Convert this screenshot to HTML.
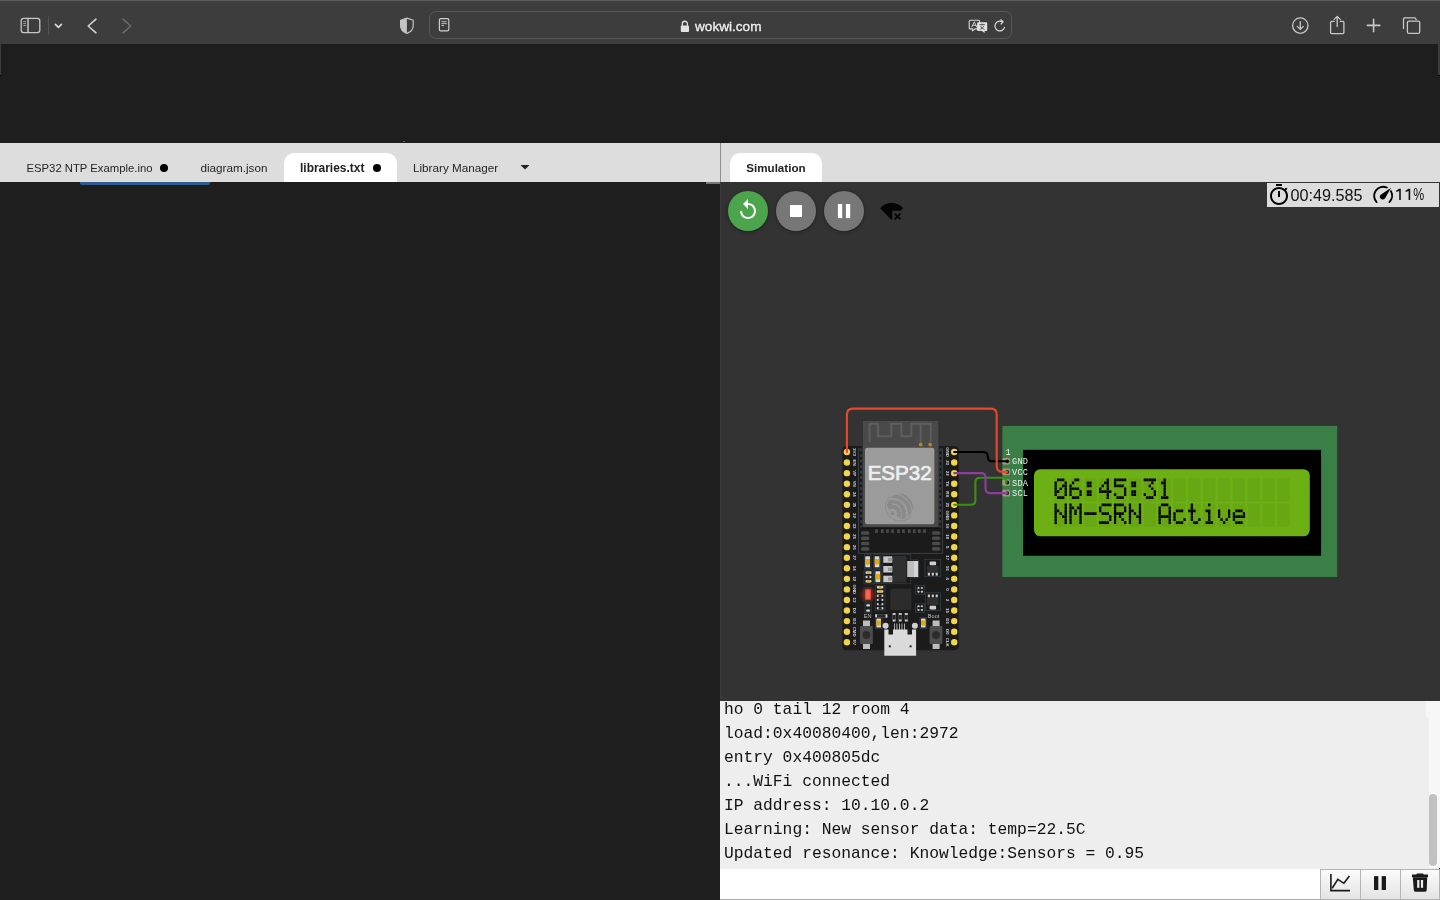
<!DOCTYPE html>
<html><head><meta charset="utf-8"><title>wokwi</title>
<style>
*{margin:0;padding:0;box-sizing:border-box}
html,body{width:1440px;height:900px;overflow:hidden;background:#1e1e1e;font-family:"Liberation Sans",sans-serif}
.a{position:absolute}
#toolbar{left:0;top:0;width:1440px;height:44px;background:#3d3d3d;border-top:1px solid #5c5c5c}
#content{left:0;top:44px;width:1440px;height:856px;background:#1e1e1e}
#winedge{left:0;top:44px;width:1px;height:31px;background:#3b3b3b}
#winedge2{left:1438px;top:44px;width:2px;height:31px;background:#3b3b3b}
#urlbar{left:429px;top:11px;width:583px;height:28px;border:1px solid #575757;border-radius:7px;background:#3d3d3d}
#url{left:695px;top:18.8px;font-size:13.6px;color:#f2f2f2;-webkit-text-stroke:0.3px #f2f2f2;transform:translateZ(0)}
#tabbar{left:0;top:143px;width:720px;height:39px;background:#dddddd}
#tabbar2{left:721px;top:143px;width:719px;height:39px;background:#dddddd}
#divider{left:720px;top:143px;width:1px;height:39px;background:#8f8f8f}
#divider2{left:720px;top:182px;width:1px;height:519px;background:#3b3b3b}
.tab{font-size:12.4px;color:#262626;top:161px;transform:translateZ(0)}
.dot{width:8.6px;height:8.6px;border-radius:50%;background:#000;top:163.7px}
#acttab{left:284px;top:153px;width:113px;height:29px;background:#fff;border-radius:10px 10px 0 0}
#simtab{left:730px;top:153px;width:92px;height:29px;background:#fff;border-radius:10px 10px 0 0}
#sim{left:721px;top:182px;width:719px;height:519px;background:#333333}
#editor{left:1px;top:182px;width:719px;height:718px;background:#1e1e1e}
#blueline{left:80px;top:182px;width:130px;height:3px;background:#2f5b8f;border-radius:0 0 2px 2px}
#greyline{left:706px;top:182px;width:14px;height:2px;background:#777}
.btn{width:40px;height:40px;border-radius:50%;top:191px;box-shadow:0 1px 4px rgba(0,0,0,.35)}
#timer{left:1267px;top:183px;width:172px;height:24px;background:#dddddd}
#serial{left:720px;top:701px;width:719px;height:168px;background:#eeeeee}
#serinput{left:720px;top:869px;width:720px;height:31px;background:#ffffff;border-bottom:1px solid #aaa}
.ser{left:724px;font-family:"Liberation Mono",monospace;font-size:16.3px;color:#111;white-space:pre;transform:scaleY(1.04);transform-origin:0 13.6px}
</style></head><body>
<div id="toolbar" class="a"></div>
<div id="content" class="a"></div>
<div id="winedge" class="a"></div><div id="winedge2" class="a"></div><div class="a" style="left:0;top:75px;width:1px;height:1px;background:#000"></div><div class="a" style="left:1438px;top:75px;width:2px;height:1px;background:#000"></div>
<div id="urlbar" class="a"></div>
<div id="url" class="a">wokwi.com</div>
<svg class="a" style="left:0;top:0" width="1440" height="44" viewBox="0 0 1440 44" fill="none" stroke-linecap="round" stroke-linejoin="round">
<rect x="21.2" y="18.3" width="18.6" height="14.3" rx="2.4" stroke="#c6c6c6" stroke-width="1.3"/>
<path d="M28 18.6V32.3" stroke="#c6c6c6" stroke-width="1.5"/>
<path d="M23.6 21.6H25.6M23.6 23.6H25.6M23.6 25.6H25.6" stroke="#a8a8a8" stroke-width="0.9"/>
<path d="M48.6 16.8V34.6" stroke="#565656" stroke-width="1"/>
<path d="M55.4 24.4L58.4 27.4L61.4 24.4" stroke="#d8d8d8" stroke-width="1.7"/>
<path d="M96 19.2L88.2 26L96 32.8" stroke="#d2d2d2" stroke-width="1.6"/>
<path d="M123 19.2L130.8 26L123 32.8" stroke="#6a6a6a" stroke-width="1.6"/>
<path d="M406.9 18.1L400.6 20.2V25.8C400.6 29.8 403.3 32 406.9 33.4C410.5 32 413.2 29.8 413.2 25.8V20.2Z" stroke="#c4c4c4" stroke-width="1.2"/>
<path d="M406.9 18.1L400.6 20.2V25.8C400.6 29.8 403.3 32 406.9 33.4Z" fill="#c4c4c4"/>
<rect x="439.4" y="18.6" width="9.4" height="12.2" rx="1.4" stroke="#cfcfcf" stroke-width="1.2"/>
<path d="M441.8 21.7H446.3M441.8 23.6H446.3M441.8 25.5H443.6" stroke="#cfcfcf" stroke-width="0.9"/>
<path d="M682.3 25.6V23.8A2.55 2.55 0 0 1 687.4 23.8V25.6" stroke="#e2e2e2" stroke-width="1.3"/>
<rect x="680.8" y="25.4" width="8.2" height="6.7" rx="1" fill="#e2e2e2"/>
<path d="M970.2 20.3H978.6Q979.6 20.3 979.6 21.3V27.9Q979.6 28.9 978.6 28.9H975L972.5 30.8V28.9H970.2Q969.2 28.9 969.2 27.9V21.3Q969.2 20.3 970.2 20.3Z" stroke="#d6d6d6" stroke-width="1.1"/>
<path d="M971.9 27L974.3 21.8L976.7 27M972.8 25.3H975.8" stroke="#d6d6d6" stroke-width="0.9"/>
<path d="M978 22.3H986.3Q987.2 22.3 987.2 23.2V30Q987.2 30.9 986.3 30.9H984.6V33L982 30.9H978Q977.1 30.9 977.1 30V23.2Q977.1 22.3 978 22.3Z" fill="#e4e4e4"/>
<path d="M979.8 24.6H984.5M982.1 24V25M980.5 26.2Q982 29 984.2 29.5M983.8 26.2Q982.4 29 980 29.5" stroke="#3d3d3d" stroke-width="0.8"/>
<path d="M1004.5 27.4A4.85 4.85 0 1 1 1002.3 21.9" stroke="#d6d6d6" stroke-width="1.2"/>
<path d="M1000.8 19.8L1003.1 21.8L1001 24" stroke="#d6d6d6" stroke-width="1.2"/>
<circle cx="1300.3" cy="25.6" r="7.7" stroke="#c8c8c8" stroke-width="1.3"/>
<path d="M1300.3 21.6V29.3M1297.3 26.4L1300.3 29.4L1303.3 26.4" stroke="#c8c8c8" stroke-width="1.3"/>
<path d="M1334.3 21.3H1331.6Q1330.6 21.3 1330.6 22.3V32.6Q1330.6 33.6 1331.6 33.6H1342.9Q1343.9 33.6 1343.9 32.6V22.3Q1343.9 21.3 1342.9 21.3H1340.2" stroke="#c8c8c8" stroke-width="1.3"/>
<path d="M1337.2 16.6V26.6M1334.2 19.4L1337.2 16.4L1340.2 19.4" stroke="#c8c8c8" stroke-width="1.3"/>
<path d="M1373.6 19.2V31.8M1367.4 25.4H1379.8" stroke="#c8c8c8" stroke-width="1.6"/>
<path d="M1403.5 28.6V18.9Q1403.5 17.8 1404.6 17.8H1414.6Q1415.9 17.8 1416.1 19.6" stroke="#c8c8c8" stroke-width="1.3"/>
<rect x="1407.4" y="21.1" width="12.3" height="12.3" rx="1.5" stroke="#c8c8c8" stroke-width="1.3"/>
</svg>

<div id="editor" class="a"></div><div class="a" style="left:403px;top:141px;width:2px;height:1px;background:#5e5e5e"></div>
<div id="tabbar" class="a"></div>
<div id="tabbar2" class="a"></div>
<div id="acttab" class="a"></div>
<div id="simtab" class="a"></div>
<div class="a tab" style="left:26.5px;top:161.8px;font-size:11.3px">ESP32 NTP Example.ino</div>
<div class="a dot" style="left:159.8px"></div>
<div class="a tab" style="left:200.5px;top:161.4px;font-size:11.7px">diagram.json</div>
<div class="a tab" style="left:300px;top:161.2px;font-size:11.95px;font-weight:bold;color:#222">libraries.txt</div>
<div class="a dot" style="left:372.6px"></div>
<div class="a tab" style="left:413px;top:161.4px;font-size:11.7px">Library Manager</div>
<svg class="a" style="left:519px;top:163px" width="12" height="8"><path d="M1.5 2H10.5L6 6.5Z" fill="#222"/></svg>
<div class="a tab" style="left:746.3px;top:161.4px;font-size:11.6px;font-weight:bold;color:#222">Simulation</div>
<div id="blueline" class="a"></div>
<div id="greyline" class="a"></div>
<div id="sim" class="a"></div>
<div id="divider" class="a"></div><div id="divider2" class="a"></div>

<div class="a btn" style="left:728px;background:#4ca44c"></div>
<div class="a btn" style="left:776px;background:#777"></div>
<div class="a btn" style="left:824px;background:#777"></div>

<!--SIM--><svg class="a" style="left:0;top:0;transform:translateZ(0)" width="1440" height="900" viewBox="0 0 1440 900" font-family="Liberation Sans">
<defs><filter id="blur" x="-1" y="-1" width="3" height="3"><feGaussianBlur stdDeviation="2.5"/></filter></defs>
<g transform="translate(1002.4 425.9) scale(4.185 4.197)">
<rect width="80" height="36" fill="#3b7f47"/>
<rect x="4.95" y="5.7" width="71.2" height="25.25" fill="#000"/>
<rect x="7.55" y="10.3" width="65.9" height="16" rx="1.5" fill="#6cb015"/>
<g transform="translate(12.45 12.55)"><path d="M0.00 0.00h2.95v5.55h-2.95zM3.55 0.00h2.95v5.55h-2.95zM7.10 0.00h2.95v5.55h-2.95zM10.65 0.00h2.95v5.55h-2.95zM14.20 0.00h2.95v5.55h-2.95zM17.75 0.00h2.95v5.55h-2.95zM21.30 0.00h2.95v5.55h-2.95zM24.85 0.00h2.95v5.55h-2.95zM28.40 0.00h2.95v5.55h-2.95zM31.95 0.00h2.95v5.55h-2.95zM35.50 0.00h2.95v5.55h-2.95zM39.05 0.00h2.95v5.55h-2.95zM42.60 0.00h2.95v5.55h-2.95zM46.15 0.00h2.95v5.55h-2.95zM49.70 0.00h2.95v5.55h-2.95zM53.25 0.00h2.95v5.55h-2.95zM0.00 5.95h2.95v5.55h-2.95zM3.55 5.95h2.95v5.55h-2.95zM7.10 5.95h2.95v5.55h-2.95zM10.65 5.95h2.95v5.55h-2.95zM14.20 5.95h2.95v5.55h-2.95zM17.75 5.95h2.95v5.55h-2.95zM21.30 5.95h2.95v5.55h-2.95zM24.85 5.95h2.95v5.55h-2.95zM28.40 5.95h2.95v5.55h-2.95zM31.95 5.95h2.95v5.55h-2.95zM35.50 5.95h2.95v5.55h-2.95zM39.05 5.95h2.95v5.55h-2.95zM42.60 5.95h2.95v5.55h-2.95zM46.15 5.95h2.95v5.55h-2.95zM49.70 5.95h2.95v5.55h-2.95zM53.25 5.95h2.95v5.55h-2.95z" fill="#000" fill-opacity="0.05"/><path d="M0.60 0.00h.55v.65h-.55zM1.20 0.00h.55v.65h-.55zM1.80 0.00h.55v.65h-.55zM0.00 0.70h.55v.65h-.55zM2.40 0.70h.55v.65h-.55zM0.00 1.40h.55v.65h-.55zM1.80 1.40h.55v.65h-.55zM2.40 1.40h.55v.65h-.55zM0.00 2.10h.55v.65h-.55zM1.20 2.10h.55v.65h-.55zM2.40 2.10h.55v.65h-.55zM0.00 2.80h.55v.65h-.55zM0.60 2.80h.55v.65h-.55zM2.40 2.80h.55v.65h-.55zM0.00 3.50h.55v.65h-.55zM2.40 3.50h.55v.65h-.55zM0.60 4.20h.55v.65h-.55zM1.20 4.20h.55v.65h-.55zM1.80 4.20h.55v.65h-.55zM4.75 0.00h.55v.65h-.55zM5.35 0.00h.55v.65h-.55zM4.15 0.70h.55v.65h-.55zM3.55 1.40h.55v.65h-.55zM3.55 2.10h.55v.65h-.55zM4.15 2.10h.55v.65h-.55zM4.75 2.10h.55v.65h-.55zM5.35 2.10h.55v.65h-.55zM3.55 2.80h.55v.65h-.55zM5.95 2.80h.55v.65h-.55zM3.55 3.50h.55v.65h-.55zM5.95 3.50h.55v.65h-.55zM4.15 4.20h.55v.65h-.55zM4.75 4.20h.55v.65h-.55zM5.35 4.20h.55v.65h-.55zM7.70 0.70h.55v.65h-.55zM8.30 0.70h.55v.65h-.55zM7.70 1.40h.55v.65h-.55zM8.30 1.40h.55v.65h-.55zM7.70 2.80h.55v.65h-.55zM8.30 2.80h.55v.65h-.55zM7.70 3.50h.55v.65h-.55zM8.30 3.50h.55v.65h-.55zM12.45 0.00h.55v.65h-.55zM11.85 0.70h.55v.65h-.55zM12.45 0.70h.55v.65h-.55zM11.25 1.40h.55v.65h-.55zM12.45 1.40h.55v.65h-.55zM10.65 2.10h.55v.65h-.55zM12.45 2.10h.55v.65h-.55zM10.65 2.80h.55v.65h-.55zM11.25 2.80h.55v.65h-.55zM11.85 2.80h.55v.65h-.55zM12.45 2.80h.55v.65h-.55zM13.05 2.80h.55v.65h-.55zM12.45 3.50h.55v.65h-.55zM12.45 4.20h.55v.65h-.55zM14.20 0.00h.55v.65h-.55zM14.80 0.00h.55v.65h-.55zM15.40 0.00h.55v.65h-.55zM16.00 0.00h.55v.65h-.55zM16.60 0.00h.55v.65h-.55zM14.20 0.70h.55v.65h-.55zM14.20 1.40h.55v.65h-.55zM14.80 1.40h.55v.65h-.55zM15.40 1.40h.55v.65h-.55zM16.00 1.40h.55v.65h-.55zM16.60 2.10h.55v.65h-.55zM16.60 2.80h.55v.65h-.55zM14.20 3.50h.55v.65h-.55zM16.60 3.50h.55v.65h-.55zM14.80 4.20h.55v.65h-.55zM15.40 4.20h.55v.65h-.55zM16.00 4.20h.55v.65h-.55zM18.35 0.70h.55v.65h-.55zM18.95 0.70h.55v.65h-.55zM18.35 1.40h.55v.65h-.55zM18.95 1.40h.55v.65h-.55zM18.35 2.80h.55v.65h-.55zM18.95 2.80h.55v.65h-.55zM18.35 3.50h.55v.65h-.55zM18.95 3.50h.55v.65h-.55zM21.30 0.00h.55v.65h-.55zM21.90 0.00h.55v.65h-.55zM22.50 0.00h.55v.65h-.55zM23.10 0.00h.55v.65h-.55zM23.70 0.00h.55v.65h-.55zM23.10 0.70h.55v.65h-.55zM22.50 1.40h.55v.65h-.55zM23.10 2.10h.55v.65h-.55zM23.70 2.80h.55v.65h-.55zM21.30 3.50h.55v.65h-.55zM23.70 3.50h.55v.65h-.55zM21.90 4.20h.55v.65h-.55zM22.50 4.20h.55v.65h-.55zM23.10 4.20h.55v.65h-.55zM26.05 0.00h.55v.65h-.55zM25.45 0.70h.55v.65h-.55zM26.05 0.70h.55v.65h-.55zM26.05 1.40h.55v.65h-.55zM26.05 2.10h.55v.65h-.55zM26.05 2.80h.55v.65h-.55zM26.05 3.50h.55v.65h-.55zM25.45 4.20h.55v.65h-.55zM26.05 4.20h.55v.65h-.55zM26.65 4.20h.55v.65h-.55zM0.00 5.95h.55v.65h-.55zM2.40 5.95h.55v.65h-.55zM0.00 6.65h.55v.65h-.55zM2.40 6.65h.55v.65h-.55zM0.00 7.35h.55v.65h-.55zM0.60 7.35h.55v.65h-.55zM2.40 7.35h.55v.65h-.55zM0.00 8.05h.55v.65h-.55zM1.20 8.05h.55v.65h-.55zM2.40 8.05h.55v.65h-.55zM0.00 8.75h.55v.65h-.55zM1.80 8.75h.55v.65h-.55zM2.40 8.75h.55v.65h-.55zM0.00 9.45h.55v.65h-.55zM2.40 9.45h.55v.65h-.55zM0.00 10.15h.55v.65h-.55zM2.40 10.15h.55v.65h-.55zM3.55 5.95h.55v.65h-.55zM5.95 5.95h.55v.65h-.55zM3.55 6.65h.55v.65h-.55zM4.15 6.65h.55v.65h-.55zM5.35 6.65h.55v.65h-.55zM5.95 6.65h.55v.65h-.55zM3.55 7.35h.55v.65h-.55zM4.75 7.35h.55v.65h-.55zM5.95 7.35h.55v.65h-.55zM3.55 8.05h.55v.65h-.55zM4.75 8.05h.55v.65h-.55zM5.95 8.05h.55v.65h-.55zM3.55 8.75h.55v.65h-.55zM5.95 8.75h.55v.65h-.55zM3.55 9.45h.55v.65h-.55zM5.95 9.45h.55v.65h-.55zM3.55 10.15h.55v.65h-.55zM5.95 10.15h.55v.65h-.55zM7.10 8.05h.55v.65h-.55zM7.70 8.05h.55v.65h-.55zM8.30 8.05h.55v.65h-.55zM8.90 8.05h.55v.65h-.55zM9.50 8.05h.55v.65h-.55zM11.25 5.95h.55v.65h-.55zM11.85 5.95h.55v.65h-.55zM12.45 5.95h.55v.65h-.55zM13.05 5.95h.55v.65h-.55zM10.65 6.65h.55v.65h-.55zM10.65 7.35h.55v.65h-.55zM11.25 8.05h.55v.65h-.55zM11.85 8.05h.55v.65h-.55zM12.45 8.05h.55v.65h-.55zM13.05 8.75h.55v.65h-.55zM13.05 9.45h.55v.65h-.55zM10.65 10.15h.55v.65h-.55zM11.25 10.15h.55v.65h-.55zM11.85 10.15h.55v.65h-.55zM12.45 10.15h.55v.65h-.55zM14.20 5.95h.55v.65h-.55zM14.80 5.95h.55v.65h-.55zM15.40 5.95h.55v.65h-.55zM16.00 5.95h.55v.65h-.55zM14.20 6.65h.55v.65h-.55zM16.60 6.65h.55v.65h-.55zM14.20 7.35h.55v.65h-.55zM16.60 7.35h.55v.65h-.55zM14.20 8.05h.55v.65h-.55zM14.80 8.05h.55v.65h-.55zM15.40 8.05h.55v.65h-.55zM16.00 8.05h.55v.65h-.55zM14.20 8.75h.55v.65h-.55zM15.40 8.75h.55v.65h-.55zM14.20 9.45h.55v.65h-.55zM16.00 9.45h.55v.65h-.55zM14.20 10.15h.55v.65h-.55zM16.60 10.15h.55v.65h-.55zM17.75 5.95h.55v.65h-.55zM20.15 5.95h.55v.65h-.55zM17.75 6.65h.55v.65h-.55zM20.15 6.65h.55v.65h-.55zM17.75 7.35h.55v.65h-.55zM18.35 7.35h.55v.65h-.55zM20.15 7.35h.55v.65h-.55zM17.75 8.05h.55v.65h-.55zM18.95 8.05h.55v.65h-.55zM20.15 8.05h.55v.65h-.55zM17.75 8.75h.55v.65h-.55zM19.55 8.75h.55v.65h-.55zM20.15 8.75h.55v.65h-.55zM17.75 9.45h.55v.65h-.55zM20.15 9.45h.55v.65h-.55zM17.75 10.15h.55v.65h-.55zM20.15 10.15h.55v.65h-.55zM25.45 5.95h.55v.65h-.55zM26.05 5.95h.55v.65h-.55zM26.65 5.95h.55v.65h-.55zM24.85 6.65h.55v.65h-.55zM27.25 6.65h.55v.65h-.55zM24.85 7.35h.55v.65h-.55zM27.25 7.35h.55v.65h-.55zM24.85 8.05h.55v.65h-.55zM27.25 8.05h.55v.65h-.55zM24.85 8.75h.55v.65h-.55zM25.45 8.75h.55v.65h-.55zM26.05 8.75h.55v.65h-.55zM26.65 8.75h.55v.65h-.55zM27.25 8.75h.55v.65h-.55zM24.85 9.45h.55v.65h-.55zM27.25 9.45h.55v.65h-.55zM24.85 10.15h.55v.65h-.55zM27.25 10.15h.55v.65h-.55zM29.00 7.35h.55v.65h-.55zM29.60 7.35h.55v.65h-.55zM30.20 7.35h.55v.65h-.55zM28.40 8.05h.55v.65h-.55zM28.40 8.75h.55v.65h-.55zM28.40 9.45h.55v.65h-.55zM30.80 9.45h.55v.65h-.55zM29.00 10.15h.55v.65h-.55zM29.60 10.15h.55v.65h-.55zM30.20 10.15h.55v.65h-.55zM32.55 5.95h.55v.65h-.55zM32.55 6.65h.55v.65h-.55zM31.95 7.35h.55v.65h-.55zM32.55 7.35h.55v.65h-.55zM33.15 7.35h.55v.65h-.55zM32.55 8.05h.55v.65h-.55zM32.55 8.75h.55v.65h-.55zM32.55 9.45h.55v.65h-.55zM34.35 9.45h.55v.65h-.55zM33.15 10.15h.55v.65h-.55zM33.75 10.15h.55v.65h-.55zM36.70 5.95h.55v.65h-.55zM36.10 7.35h.55v.65h-.55zM36.70 7.35h.55v.65h-.55zM36.70 8.05h.55v.65h-.55zM36.70 8.75h.55v.65h-.55zM36.70 9.45h.55v.65h-.55zM36.10 10.15h.55v.65h-.55zM36.70 10.15h.55v.65h-.55zM37.30 10.15h.55v.65h-.55zM39.05 7.35h.55v.65h-.55zM41.45 7.35h.55v.65h-.55zM39.05 8.05h.55v.65h-.55zM41.45 8.05h.55v.65h-.55zM39.05 8.75h.55v.65h-.55zM41.45 8.75h.55v.65h-.55zM39.65 9.45h.55v.65h-.55zM40.85 9.45h.55v.65h-.55zM40.25 10.15h.55v.65h-.55zM43.20 7.35h.55v.65h-.55zM43.80 7.35h.55v.65h-.55zM44.40 7.35h.55v.65h-.55zM42.60 8.05h.55v.65h-.55zM45.00 8.05h.55v.65h-.55zM42.60 8.75h.55v.65h-.55zM43.20 8.75h.55v.65h-.55zM43.80 8.75h.55v.65h-.55zM44.40 8.75h.55v.65h-.55zM45.00 8.75h.55v.65h-.55zM42.60 9.45h.55v.65h-.55zM43.20 10.15h.55v.65h-.55zM43.80 10.15h.55v.65h-.55zM44.40 10.15h.55v.65h-.55z" fill="#000"/></g>
</g>
<rect x="1002.3" y="458.0" width="7.8" height="6.6" rx="1.6" fill="#a09a7c"/><circle cx="1007.3" cy="461.3" r="1.9" fill="#141414"/><text x="1012.1" y="464.3" font-family="Liberation Mono" font-size="8.6" letter-spacing="0.15" fill="#eeeeee">GND</text><rect x="1002.3" y="468.6" width="7.8" height="6.6" rx="1.6" fill="#a09a7c"/><circle cx="1007.3" cy="471.9" r="1.9" fill="#141414"/><text x="1012.1" y="474.9" font-family="Liberation Mono" font-size="8.6" letter-spacing="0.15" fill="#eeeeee">VCC</text><rect x="1002.3" y="479.2" width="7.8" height="6.6" rx="1.6" fill="#a09a7c"/><circle cx="1007.3" cy="482.5" r="1.9" fill="#141414"/><text x="1012.1" y="485.5" font-family="Liberation Mono" font-size="8.6" letter-spacing="0.15" fill="#eeeeee">SDA</text><rect x="1002.3" y="489.8" width="7.8" height="6.6" rx="1.6" fill="#a09a7c"/><circle cx="1007.3" cy="493.1" r="1.9" fill="#141414"/><text x="1012.1" y="496.1" font-family="Liberation Mono" font-size="8.6" letter-spacing="0.15" fill="#eeeeee">SCL</text><text x="1005.6" y="455" font-family="Liberation Mono" font-size="8.6" fill="#f0f0f0">1</text>
<g id="esp">
<rect x="842.4" y="446" width="116.3" height="204.2" rx="4" fill="#1b1b1b"/>
<rect x="858.5" y="449" width="84" height="104.3" fill="none" stroke="#3d4a55" stroke-width="0.8"/>
<circle cx="846.9" cy="452.00" r="3.2" fill="#f1d54a"/>
<circle cx="954.2" cy="452.00" r="3.2" fill="#f1d54a"/>
<text transform="translate(853.4 452.00) rotate(90)" text-anchor="middle" font-size="4.4" font-weight="bold" fill="#d0d0d0">3V3</text>
<text transform="translate(946.0 452.00) rotate(90)" text-anchor="middle" font-size="4.4" font-weight="bold" fill="#d0d0d0">GND</text>
<circle cx="846.9" cy="462.57" r="3.2" fill="#f1d54a"/>
<circle cx="954.2" cy="462.57" r="3.2" fill="#f1d54a"/>
<text transform="translate(853.4 462.57) rotate(90)" text-anchor="middle" font-size="4.4" font-weight="bold" fill="#d0d0d0">EN</text>
<text transform="translate(946.0 462.57) rotate(90)" text-anchor="middle" font-size="4.4" font-weight="bold" fill="#d0d0d0">23</text>
<circle cx="846.9" cy="473.14" r="3.2" fill="#f1d54a"/>
<circle cx="954.2" cy="473.14" r="3.2" fill="#f1d54a"/>
<text transform="translate(853.4 473.14) rotate(90)" text-anchor="middle" font-size="4.4" font-weight="bold" fill="#d0d0d0">VP</text>
<text transform="translate(946.0 473.14) rotate(90)" text-anchor="middle" font-size="4.4" font-weight="bold" fill="#d0d0d0">22</text>
<circle cx="846.9" cy="483.71" r="3.2" fill="#f1d54a"/>
<circle cx="954.2" cy="483.71" r="3.2" fill="#f1d54a"/>
<text transform="translate(853.4 483.71) rotate(90)" text-anchor="middle" font-size="4.4" font-weight="bold" fill="#d0d0d0">VN</text>
<text transform="translate(946.0 483.71) rotate(90)" text-anchor="middle" font-size="4.4" font-weight="bold" fill="#d0d0d0">TX</text>
<circle cx="846.9" cy="494.28" r="3.2" fill="#f1d54a"/>
<circle cx="954.2" cy="494.28" r="3.2" fill="#f1d54a"/>
<text transform="translate(853.4 494.28) rotate(90)" text-anchor="middle" font-size="4.4" font-weight="bold" fill="#d0d0d0">34</text>
<text transform="translate(946.0 494.28) rotate(90)" text-anchor="middle" font-size="4.4" font-weight="bold" fill="#d0d0d0">RX</text>
<circle cx="846.9" cy="504.85" r="3.2" fill="#f1d54a"/>
<circle cx="954.2" cy="504.85" r="3.2" fill="#f1d54a"/>
<text transform="translate(853.4 504.85) rotate(90)" text-anchor="middle" font-size="4.4" font-weight="bold" fill="#d0d0d0">35</text>
<text transform="translate(946.0 504.85) rotate(90)" text-anchor="middle" font-size="4.4" font-weight="bold" fill="#d0d0d0">21</text>
<circle cx="846.9" cy="515.42" r="3.2" fill="#f1d54a"/>
<circle cx="954.2" cy="515.42" r="3.2" fill="#f1d54a"/>
<text transform="translate(853.4 515.42) rotate(90)" text-anchor="middle" font-size="4.4" font-weight="bold" fill="#d0d0d0">32</text>
<text transform="translate(946.0 515.42) rotate(90)" text-anchor="middle" font-size="4.4" font-weight="bold" fill="#d0d0d0">GND</text>
<circle cx="846.9" cy="525.99" r="3.2" fill="#f1d54a"/>
<circle cx="954.2" cy="525.99" r="3.2" fill="#f1d54a"/>
<text transform="translate(853.4 525.99) rotate(90)" text-anchor="middle" font-size="4.4" font-weight="bold" fill="#d0d0d0">33</text>
<text transform="translate(946.0 525.99) rotate(90)" text-anchor="middle" font-size="4.4" font-weight="bold" fill="#d0d0d0">19</text>
<circle cx="846.9" cy="536.56" r="3.2" fill="#f1d54a"/>
<circle cx="954.2" cy="536.56" r="3.2" fill="#f1d54a"/>
<text transform="translate(853.4 536.56) rotate(90)" text-anchor="middle" font-size="4.4" font-weight="bold" fill="#d0d0d0">25</text>
<text transform="translate(946.0 536.56) rotate(90)" text-anchor="middle" font-size="4.4" font-weight="bold" fill="#d0d0d0">18</text>
<circle cx="846.9" cy="547.13" r="3.2" fill="#f1d54a"/>
<circle cx="954.2" cy="547.13" r="3.2" fill="#f1d54a"/>
<text transform="translate(853.4 547.13) rotate(90)" text-anchor="middle" font-size="4.4" font-weight="bold" fill="#d0d0d0">26</text>
<text transform="translate(946.0 547.13) rotate(90)" text-anchor="middle" font-size="4.4" font-weight="bold" fill="#d0d0d0">5</text>
<circle cx="846.9" cy="557.70" r="3.2" fill="#f1d54a"/>
<circle cx="954.2" cy="557.70" r="3.2" fill="#f1d54a"/>
<text transform="translate(853.4 557.70) rotate(90)" text-anchor="middle" font-size="4.4" font-weight="bold" fill="#d0d0d0">27</text>
<text transform="translate(946.0 557.70) rotate(90)" text-anchor="middle" font-size="4.4" font-weight="bold" fill="#d0d0d0">17</text>
<circle cx="846.9" cy="568.27" r="3.2" fill="#f1d54a"/>
<circle cx="954.2" cy="568.27" r="3.2" fill="#f1d54a"/>
<text transform="translate(853.4 568.27) rotate(90)" text-anchor="middle" font-size="4.4" font-weight="bold" fill="#d0d0d0">14</text>
<text transform="translate(946.0 568.27) rotate(90)" text-anchor="middle" font-size="4.4" font-weight="bold" fill="#d0d0d0">16</text>
<circle cx="846.9" cy="578.84" r="3.2" fill="#f1d54a"/>
<circle cx="954.2" cy="578.84" r="3.2" fill="#f1d54a"/>
<text transform="translate(853.4 578.84) rotate(90)" text-anchor="middle" font-size="4.4" font-weight="bold" fill="#d0d0d0">12</text>
<text transform="translate(946.0 578.84) rotate(90)" text-anchor="middle" font-size="4.4" font-weight="bold" fill="#d0d0d0">4</text>
<circle cx="846.9" cy="589.41" r="3.2" fill="#f1d54a"/>
<circle cx="954.2" cy="589.41" r="3.2" fill="#f1d54a"/>
<text transform="translate(853.4 589.41) rotate(90)" text-anchor="middle" font-size="4.4" font-weight="bold" fill="#d0d0d0">GND</text>
<text transform="translate(946.0 589.41) rotate(90)" text-anchor="middle" font-size="4.4" font-weight="bold" fill="#d0d0d0">0</text>
<circle cx="846.9" cy="599.98" r="3.2" fill="#f1d54a"/>
<circle cx="954.2" cy="599.98" r="3.2" fill="#f1d54a"/>
<text transform="translate(853.4 599.98) rotate(90)" text-anchor="middle" font-size="4.4" font-weight="bold" fill="#d0d0d0">13</text>
<text transform="translate(946.0 599.98) rotate(90)" text-anchor="middle" font-size="4.4" font-weight="bold" fill="#d0d0d0">2</text>
<circle cx="846.9" cy="610.55" r="3.2" fill="#f1d54a"/>
<circle cx="954.2" cy="610.55" r="3.2" fill="#f1d54a"/>
<text transform="translate(853.4 610.55) rotate(90)" text-anchor="middle" font-size="4.4" font-weight="bold" fill="#d0d0d0">D2</text>
<text transform="translate(946.0 610.55) rotate(90)" text-anchor="middle" font-size="4.4" font-weight="bold" fill="#d0d0d0">15</text>
<circle cx="846.9" cy="621.12" r="3.2" fill="#f1d54a"/>
<circle cx="954.2" cy="621.12" r="3.2" fill="#f1d54a"/>
<text transform="translate(853.4 621.12) rotate(90)" text-anchor="middle" font-size="4.4" font-weight="bold" fill="#d0d0d0">D3</text>
<text transform="translate(946.0 621.12) rotate(90)" text-anchor="middle" font-size="4.4" font-weight="bold" fill="#d0d0d0">D1</text>
<circle cx="846.9" cy="631.69" r="3.2" fill="#f1d54a"/>
<circle cx="954.2" cy="631.69" r="3.2" fill="#f1d54a"/>
<text transform="translate(853.4 631.69) rotate(90)" text-anchor="middle" font-size="4.4" font-weight="bold" fill="#d0d0d0">CMD</text>
<text transform="translate(946.0 631.69) rotate(90)" text-anchor="middle" font-size="4.4" font-weight="bold" fill="#d0d0d0">D0</text>
<circle cx="846.9" cy="642.26" r="3.2" fill="#f1d54a"/>
<circle cx="954.2" cy="642.26" r="3.2" fill="#f1d54a"/>
<text transform="translate(853.4 642.26) rotate(90)" text-anchor="middle" font-size="4.4" font-weight="bold" fill="#d0d0d0">5V</text>
<text transform="translate(946.0 642.26) rotate(90)" text-anchor="middle" font-size="4.4" font-weight="bold" fill="#d0d0d0">CLK</text>
<rect x="862.4" y="420.3" width="76.5" height="108" fill="#4a4a4a" stroke="#2a2a2a" stroke-width="0.6"/>
<path d="M869.6 442.3V423.8H878V436.3H891.3V423.8H901.3V436.3H911.3V423.8H930.7V442" fill="none" stroke="#5e5e5e" stroke-width="2"/>
<path d="M920.7 423.8V443" fill="none" stroke="#5e5e5e" stroke-width="2"/>
<circle cx="920.7" cy="444.6" r="1.9" fill="#b58a14"/><circle cx="930.2" cy="444.6" r="1.9" fill="#b58a14"/>
<rect x="859.9" y="449.5" width="2.6" height="78" fill="#383838"/><rect x="938.8" y="449.5" width="2.6" height="78" fill="#383838"/>
<rect x="860.3" y="451.5" width="1.5" height="2.6" fill="#0e0e0e"/>
<rect x="939.5" y="451.5" width="1.5" height="2.6" fill="#0e0e0e"/>
<rect x="860.3" y="457.0" width="1.5" height="2.6" fill="#0e0e0e"/>
<rect x="939.5" y="457.0" width="1.5" height="2.6" fill="#0e0e0e"/>
<rect x="860.3" y="462.5" width="1.5" height="2.6" fill="#0e0e0e"/>
<rect x="939.5" y="462.5" width="1.5" height="2.6" fill="#0e0e0e"/>
<rect x="860.3" y="468.0" width="1.5" height="2.6" fill="#0e0e0e"/>
<rect x="939.5" y="468.0" width="1.5" height="2.6" fill="#0e0e0e"/>
<rect x="860.3" y="473.5" width="1.5" height="2.6" fill="#0e0e0e"/>
<rect x="939.5" y="473.5" width="1.5" height="2.6" fill="#0e0e0e"/>
<rect x="860.3" y="479.0" width="1.5" height="2.6" fill="#0e0e0e"/>
<rect x="939.5" y="479.0" width="1.5" height="2.6" fill="#0e0e0e"/>
<rect x="860.3" y="484.5" width="1.5" height="2.6" fill="#0e0e0e"/>
<rect x="939.5" y="484.5" width="1.5" height="2.6" fill="#0e0e0e"/>
<rect x="860.3" y="490.0" width="1.5" height="2.6" fill="#0e0e0e"/>
<rect x="939.5" y="490.0" width="1.5" height="2.6" fill="#0e0e0e"/>
<rect x="860.3" y="495.5" width="1.5" height="2.6" fill="#0e0e0e"/>
<rect x="939.5" y="495.5" width="1.5" height="2.6" fill="#0e0e0e"/>
<rect x="860.3" y="501.0" width="1.5" height="2.6" fill="#0e0e0e"/>
<rect x="939.5" y="501.0" width="1.5" height="2.6" fill="#0e0e0e"/>
<rect x="860.3" y="506.5" width="1.5" height="2.6" fill="#0e0e0e"/>
<rect x="939.5" y="506.5" width="1.5" height="2.6" fill="#0e0e0e"/>
<rect x="860.3" y="512.0" width="1.5" height="2.6" fill="#0e0e0e"/>
<rect x="939.5" y="512.0" width="1.5" height="2.6" fill="#0e0e0e"/>
<rect x="860.3" y="517.5" width="1.5" height="2.6" fill="#0e0e0e"/>
<rect x="939.5" y="517.5" width="1.5" height="2.6" fill="#0e0e0e"/>
<rect x="860.3" y="523.0" width="1.5" height="2.6" fill="#0e0e0e"/>
<rect x="939.5" y="523.0" width="1.5" height="2.6" fill="#0e0e0e"/>
<rect x="865" y="447.7" width="69.4" height="76.6" rx="2.2" fill="#9b9b9b"/>
<text x="899.7" y="480.3" text-anchor="middle" font-size="20.6" fill="#efefef" stroke="#efefef" stroke-width="0.7" font-family="Liberation Sans">ESP32</text>
<clipPath id="lgclip"><circle cx="900" cy="506.6" r="12.9"/></clipPath><g clip-path="url(#lgclip)" fill="none"><path d="M886.96 506.21A9 9 0 0 1 900.13 518.07" stroke="#8a8a8a" stroke-width="9"/><path d="M886.06 497.35A17.2 17.2 0 0 1 909.44 516.29" stroke="#8a8a8a" stroke-width="3.6"/><path d="M890.26 492.02A21.4 21.4 0 0 1 913.87 514.42" stroke="#8a8a8a" stroke-width="2.4"/><path d="M892.02 504.11A9.2 9.2 0 0 1 899.55 519.21" stroke="#9b9b9b" stroke-width="1.1"/></g><circle cx="892.5" cy="513.3" r="3.2" fill="#9b9b9b"/><circle cx="892.5" cy="513.3" r="1.9" fill="#8a8a8a"/><path d="M911.30 515.69A14.5 14.5 0 1 1 890.37 495.76" fill="none" stroke="#8a8a8a" stroke-width="0.9"/>
<rect x="862.4" y="527.3" width="76.5" height="1.4" fill="#0d0d0d"/>
<rect x="875.1" y="529.3" width="2.8" height="3.6" rx="0.5" fill="#494949"/>
<rect x="880.9" y="529.3" width="2.8" height="3.6" rx="0.5" fill="#494949"/>
<rect x="886.1" y="529.3" width="2.8" height="3.6" rx="0.5" fill="#494949"/>
<rect x="891.1" y="529.3" width="2.8" height="3.6" rx="0.5" fill="#494949"/>
<rect x="897.1" y="529.3" width="2.8" height="3.6" rx="0.5" fill="#494949"/>
<rect x="902.1" y="529.3" width="2.8" height="3.6" rx="0.5" fill="#494949"/>
<rect x="907.9" y="529.3" width="2.8" height="3.6" rx="0.5" fill="#494949"/>
<rect x="912.9" y="529.3" width="2.8" height="3.6" rx="0.5" fill="#494949"/>
<rect x="917.9" y="529.3" width="2.8" height="3.6" rx="0.5" fill="#494949"/>
<rect x="923.1" y="529.3" width="2.8" height="3.6" rx="0.5" fill="#494949"/>
<rect x="861" y="531.2" width="8.3" height="3.6" rx="1.5" fill="#4a4a4a"/>
<rect x="932" y="531.2" width="8.3" height="3.6" rx="1.5" fill="#4a4a4a"/>
<rect x="861" y="536.4" width="8.3" height="3.6" rx="1.5" fill="#4a4a4a"/>
<rect x="932" y="536.4" width="8.3" height="3.6" rx="1.5" fill="#4a4a4a"/>
<rect x="861" y="541.7" width="8.3" height="3.6" rx="1.5" fill="#4a4a4a"/>
<rect x="932" y="541.7" width="8.3" height="3.6" rx="1.5" fill="#4a4a4a"/>
<rect x="861" y="547.1" width="8.3" height="3.6" rx="1.5" fill="#4a4a4a"/>
<rect x="932" y="547.1" width="8.3" height="3.6" rx="1.5" fill="#4a4a4a"/>
<rect x="864.3" y="554.8" width="6.7" height="14.0" fill="none" stroke="#38444e" stroke-width="0.7"/><rect x="865.3" y="556.3" width="4.7" height="11.0" fill="#d6d6d6"/><rect x="865.3" y="559.0" width="4.7" height="5.5" fill="#dcaa14"/>
<rect x="873.7" y="554.8" width="6.7" height="14.0" fill="none" stroke="#38444e" stroke-width="0.7"/><rect x="874.7" y="556.3" width="4.7" height="11.0" fill="#d6d6d6"/><rect x="874.7" y="559.0" width="4.7" height="5.5" fill="#dcaa14"/>
<rect x="874.5" y="569.7" width="6.7" height="14.0" fill="none" stroke="#38444e" stroke-width="0.7"/><rect x="875.5" y="571.2" width="4.7" height="11.0" fill="#d6d6d6"/><rect x="875.5" y="574.0" width="4.7" height="5.5" fill="#dcaa14"/>
<rect x="864" y="570" width="9" height="14" fill="none" stroke="#38444e" stroke-width="0.7"/>
<rect x="865.5" y="571.3" width="6" height="2.6" rx="1" fill="#d6d6d6"/><rect x="866.8" y="571.3" width="3.4" height="2.6" fill="#dcaa14"/>
<rect x="865.5" y="575.7" width="6" height="2.6" rx="1" fill="#d6d6d6"/><rect x="867.5" y="575.7" width="2" height="2.6" fill="#1b1b1b"/>
<rect x="865.5" y="580" width="6" height="2.6" rx="1" fill="#d6d6d6"/><rect x="866.8" y="580" width="3.4" height="2.6" fill="#dcaa14"/>
<path d="M882.2 554.3H910.7V559.8H918.6V577.8H910.7V583.7H882.2Z" fill="none" stroke="#38444e" stroke-width="0.7"/>
<rect x="893" y="556" width="13.5" height="26.5" fill="#2f2f2f"/>
<rect x="883.3" y="556.3" width="9" height="6.5" fill="#c8c8c8"/><rect x="888" y="557.8" width="4.3" height="3.5" fill="#9a9a9a"/>
<rect x="883.3" y="566.0" width="9" height="6.5" fill="#c8c8c8"/><rect x="888" y="567.5" width="4.3" height="3.5" fill="#9a9a9a"/>
<rect x="883.3" y="575.7" width="9" height="6.5" fill="#c8c8c8"/><rect x="888" y="577.2" width="4.3" height="3.5" fill="#9a9a9a"/>
<rect x="907.2" y="561" width="11" height="16" fill="#bdbdbd"/><rect x="914" y="561" width="4" height="16" fill="#d5d5d5"/>
<rect x="925" y="559.3" width="15.7" height="17.4" fill="none" stroke="#38444e" stroke-width="0.7"/>
<rect x="927" y="566" width="11.5" height="7" fill="#2f2f2f"/><rect x="929.6" y="561.6" width="6.5" height="3.6" rx="1" fill="#d0d0d0"/>
<rect x="927.8" y="572.8" width="2.2" height="2.8" fill="#c8c8c8"/>
<rect x="931.7" y="572.8" width="2.2" height="2.8" fill="#c8c8c8"/>
<rect x="935.6" y="572.8" width="2.2" height="2.8" fill="#c8c8c8"/>
<rect x="875.2" y="585.5" width="9.8" height="25.5" fill="none" stroke="#38444e" stroke-width="0.7"/>
<rect x="876.8" y="586.1" width="6.6" height="2.4" rx="1" fill="#d6d6d6"/><rect x="878.6" y="586.1" width="3" height="2.4" fill="#dcaa14"/>
<rect x="876.8" y="590.3" width="6.6" height="2.4" rx="1" fill="#d6d6d6"/><rect x="878.6" y="590.3" width="3" height="2.4" fill="#dcaa14"/>
<rect x="876.8" y="594.5" width="6.6" height="2.4" rx="1" fill="#d6d6d6"/><rect x="878.6" y="594.5" width="3" height="2.4" fill="#1b1b1b"/>
<rect x="876.8" y="598.7" width="6.6" height="2.4" rx="1" fill="#d6d6d6"/><rect x="878.6" y="598.7" width="3" height="2.4" fill="#1b1b1b"/>
<rect x="876.8" y="602.9" width="6.6" height="2.4" rx="1" fill="#d6d6d6"/><rect x="878.6" y="602.9" width="3" height="2.4" fill="#1b1b1b"/>
<rect x="876.8" y="607.1" width="6.6" height="2.4" rx="1" fill="#d6d6d6"/><rect x="878.6" y="607.1" width="3" height="2.4" fill="#1b1b1b"/>
<circle cx="867.9" cy="594.5" r="5.5" fill="#ff2a10" opacity="0.75" filter="url(#blur)"/>
<rect x="864" y="588" width="8" height="13" fill="none" stroke="#38444e" stroke-width="0.7"/>
<rect x="865.1" y="589.2" width="5.8" height="10.6" rx="0.8" fill="#f0503a"/><rect x="866.2" y="590.5" width="3.6" height="8" fill="#ff7a5a" opacity="0.6"/>
<rect x="865" y="603" width="6.2" height="10" fill="none" stroke="#38444e" stroke-width="0.7"/>
<rect x="866.2" y="604.2" width="3.8" height="2.4" rx="0.8" fill="#d6d6d6"/><rect x="866.2" y="609.4" width="3.8" height="2.4" rx="0.8" fill="#d6d6d6"/>
<rect x="890.5" y="588.9" width="20.7" height="21.1" rx="1" fill="#2c2c2c" stroke="#333" stroke-width="0.8" stroke-dasharray="0.6 0.9"/>
<rect x="915.5" y="585.5" width="9.2" height="8.6" fill="none" stroke="#38444e" stroke-width="0.7"/>
<rect x="917.4" y="586.9" width="2.2" height="5.8" rx="1" fill="#c8c8c8"/><rect x="920.8" y="586.9" width="2.2" height="5.8" rx="1" fill="#c8c8c8"/>
<rect x="917.4" y="588.8" width="5.6" height="2" fill="#1b1b1b"/>
<rect x="915.5" y="603.8" width="9.2" height="8.6" fill="none" stroke="#38444e" stroke-width="0.7"/>
<rect x="917.4" y="605.2" width="2.2" height="5.8" rx="1" fill="#c8c8c8"/><rect x="920.8" y="605.2" width="2.2" height="5.8" rx="1" fill="#c8c8c8"/>
<rect x="917.4" y="607.1" width="5.6" height="2" fill="#1b1b1b"/>
<rect x="925.3" y="592.8" width="15.3" height="17.7" fill="none" stroke="#38444e" stroke-width="0.7"/>
<rect x="927" y="598" width="11.5" height="7" fill="#2f2f2f"/><rect x="929.6" y="605.8" width="6.5" height="3.6" rx="1" fill="#d0d0d0"/>
<rect x="927.8" y="594.5" width="2.2" height="2.8" fill="#c8c8c8"/>
<rect x="931.7" y="594.5" width="2.2" height="2.8" fill="#c8c8c8"/>
<rect x="935.6" y="594.5" width="2.2" height="2.8" fill="#c8c8c8"/>
<text x="867.7" y="617.6" text-anchor="middle" font-size="5.6" fill="#bdbdbd">EN</text>
<text x="933.6" y="617.6" text-anchor="middle" font-size="5.6" fill="#bdbdbd">Boot</text>
<rect x="875.2" y="614.2" width="12.2" height="3.6" rx="0.5" fill="#d6d6d6"/><rect x="877" y="614.2" width="8.6" height="3.6" fill="#2a2a2a"/>
<rect x="892.6" y="613" width="3" height="8.5" rx="0.6" fill="#c8c8c8"/><rect x="892.6" y="615" width="3" height="4.5" fill="#252525"/>
<rect x="898.7" y="613" width="3" height="8.5" rx="0.6" fill="#c8c8c8"/><rect x="898.7" y="615" width="3" height="4.5" fill="#252525"/>
<rect x="904.8" y="613" width="3" height="8.5" rx="0.6" fill="#c8c8c8"/><rect x="904.8" y="615" width="3" height="4.5" fill="#252525"/>
<rect x="875.4" y="617.3" width="6.8" height="11.5" fill="none" stroke="#38444e" stroke-width="0.7"/>
<rect x="876.4" y="618.5" width="4.6" height="9" rx="0.6" fill="#d6d6d6"/><rect x="876.4" y="620.5" width="4.6" height="5" fill="#dcaa14"/>
<rect x="920.0" y="617.3" width="6.8" height="11.5" fill="none" stroke="#38444e" stroke-width="0.7"/>
<rect x="921.0" y="618.5" width="4.6" height="9" rx="0.6" fill="#d6d6d6"/><rect x="921.0" y="620.5" width="4.6" height="5" fill="#dcaa14"/>
<rect x="863.0" y="620.5" width="7" height="6" fill="#bdbdbd"/><rect x="863.0" y="643.5" width="7" height="5.5" fill="#bdbdbd"/>
<rect x="860.0" y="626" width="12.8" height="18" rx="1" fill="#4d4d4d"/>
<circle cx="866.4" cy="635" r="3.9" fill="#2c2c2c"/>
<rect x="932.6" y="620.5" width="7" height="6" fill="#bdbdbd"/><rect x="932.6" y="643.5" width="7" height="5.5" fill="#bdbdbd"/>
<rect x="929.6" y="626" width="12.8" height="18" rx="1" fill="#4d4d4d"/>
<circle cx="936.0" cy="635" r="3.9" fill="#2c2c2c"/>
<circle cx="885.6" cy="625.8" r="3" fill="#d0d0d0"/><circle cx="914.9" cy="625.8" r="3" fill="#d0d0d0"/>
<rect x="894.0" y="623.5" width="0.9" height="9.5" fill="#bdbdbd"/>
<rect x="896.5" y="623.5" width="0.9" height="9.5" fill="#bdbdbd"/>
<rect x="899.0" y="623.5" width="0.9" height="9.5" fill="#bdbdbd"/>
<rect x="901.5" y="623.5" width="0.9" height="9.5" fill="#bdbdbd"/>
<rect x="904.0" y="623.5" width="0.9" height="9.5" fill="#bdbdbd"/>
<path d="M884.3 629.5H888.5V634.5H893V629.5H907.5V634.5H912V629.5H916.1V655.7H884.3Z" fill="#dadada"/>
<rect x="888.8" y="645.3" width="2" height="2" fill="#222"/><rect x="909.6" y="645.3" width="2" height="2" fill="#222"/>
</g>
<g fill="none" stroke-width="2.1" stroke-linecap="round">
<path d="M954.2 452H983Q987.8 452 987.8 456.6V456.8Q987.8 461.3 992.3 461.3H1007.3" stroke="#000"/>
<path d="M846.9 452V414.6Q846.9 408.6 852.9 408.6H990.7Q996.7 408.6 996.7 414.6V466Q996.7 471.9 1002.6 471.9H1007.3" stroke="#ee4628"/>
<path d="M954.2 504.8H971Q975.4 504.8 975.4 500.3V482.3Q975.4 477.8 979.9 477.8H1001.8Q1006.5 477.8 1006.5 482.5" stroke="#3d8f14"/>
<path d="M954.2 473.1H981Q985.5 473.1 985.5 477.6V488.6Q985.5 493.1 990 493.1H1007.3" stroke="#8f3c9f"/>
</g>
</svg><!--/SIM-->
<div id="timer" class="a"></div>
<svg class="a" style="left:720px;top:182px" width="720" height="40" viewBox="720 182 720 40">
<path transform="translate(736 198)" fill="#fff" d="M12 5V1L7 6l5 5V7c3.31 0 6 2.69 6 6s-2.69 6-6 6-6-2.69-6-6H4c0 4.42 3.58 8 8 8s8-3.58 8-8-3.58-8-8-8z"/>
<rect x="790" y="205" width="12" height="12" fill="#fff"/>
<rect x="837.9" y="204" width="4.3" height="14.1" fill="#fff"/><rect x="845.9" y="204" width="4.3" height="14.1" fill="#fff"/>
<path d="M891.6 219.9L880.2 208.2Q885 203.1 891.6 203.1Q898.2 203.1 903.2 208.2L900.6 210.8H892.3V219.2Z" fill="#050505"/>
<path d="M894.6 213.6L900.4 219.4M900.4 213.6L894.6 219.4" stroke="#050505" stroke-width="1.9"/>
<path transform="translate(1267 182.9)" fill="#000" d="M15 1H9v2h6V1zm-4 13h2V8h-2v6zm8.03-6.61l1.42-1.42c-.43-.51-.9-.99-1.41-1.41l-1.42 1.42C16.07 4.74 14.12 4 12 4c-4.97 0-9 4.030-9 9s4.02 9 9 9 9-4.03 9-9c0-2.12-.74-4.07-1.97-5.61zM12 20c-3.87 0-7-3.13-7-7s3.13-7 7-7 7 3.13 7 7-3.13 7-7 7z"/>
<path d="M1376.6 202.1A9.1 9.1 0 0 1 1386.8 187.5M1390.9 191.15A9.1 9.1 0 0 1 1389.4 202.1" fill="none" stroke="#000" stroke-width="1.9" stroke-linecap="round"/>
<path d="M1391 187.8L1385.3 198.1A2.9 2.9 0 0 1 1380.4 194.9Z" fill="#000"/>
</svg>
<div class="a" style="left:1290.4px;top:186.2px;font-size:16.2px;color:#111;transform:translateZ(0)">00:49.585</div>
<svg class="a" style="left:1390px;top:183px;transform:translateZ(0)" width="40" height="24" viewBox="1390 183 40 24">
<path d="M1399.2 188.8H1400.8V199.9H1399.2V190.9L1396.2 192V190.6Z" fill="#111"/>
<path d="M1408.6 188.8H1410.2V199.9H1408.6V190.9L1405.6 192V190.6Z" fill="#111"/>
<text x="1413.3" y="200" font-size="16" textLength="11" lengthAdjust="spacingAndGlyphs" fill="#111" font-family="Liberation Sans">%</text>
</svg>

<div id="serial" class="a"></div>
<div id="serinput" class="a"></div>
<div class="a ser" style="top:700px">ho 0 tail 12 room 4</div>
<div class="a ser" style="top:724px">load:0x40080400,len:2972</div>
<div class="a ser" style="top:748px">entry 0x400805dc</div>
<div class="a ser" style="top:772px">...WiFi connected</div>
<div class="a ser" style="top:796px">IP address: 10.10.0.2</div>
<div class="a ser" style="top:820px">Learning: New sensor data: temp=22.5C</div>
<div class="a ser" style="top:844px">Updated resonance: Knowledge:Sensors = 0.95</div>


<div class="a" style="left:1426px;top:701px;width:14px;height:15.7px;background:#f7f7f7"></div><div class="a" style="left:1429px;top:716.7px;width:11px;height:151.3px;background:#f7f7f7"></div>
<div class="a" style="left:1428.5px;top:793.7px;width:8.5px;height:72.3px;background:#c1c1c1;border-radius:4px"></div>
<div class="a" style="left:1320px;top:869px;width:120px;height:31px;background:linear-gradient(#fbfbfb,#e4e4e4);border:1px solid #b4b4b4"></div>
<div class="a" style="left:1360px;top:869px;width:1px;height:31px;background:#b4b4b4"></div>
<div class="a" style="left:1400px;top:869px;width:1px;height:31px;background:#b4b4b4"></div>
<svg class="a" style="left:1320px;top:869px" width="120" height="31" viewBox="1320 869 120 31">
<path d="M1330.9 873.9V890.6H1350" fill="none" stroke="#1a1a1a" stroke-width="1.6"/>
<path d="M1332.2 888.3L1337.8 879.4L1343.9 883.3L1349.4 876.1" fill="none" stroke="#1a1a1a" stroke-width="1.6"/>
<rect x="1374" y="876.1" width="4.3" height="13.9" fill="#1a1a1a"/><rect x="1381.7" y="876.1" width="4.3" height="13.9" fill="#1a1a1a"/>
<path d="M1412 877.3H1428V874.6H1423.8L1423 873.6H1417L1416.2 874.6H1412Z" fill="#1a1a1a"/>
<path d="M1412.8 877.2H1427.2L1426.7 889.9Q1426.6 891.8 1424.7 891.8H1415.8Q1413.9 891.8 1413.8 889.9Z" fill="#1a1a1a"/>
<rect x="1417.2" y="880" width="2.2" height="7.8" fill="#eee"/><rect x="1420.9" y="880" width="2.2" height="7.8" fill="#eee"/>
</svg>
</body></html>
